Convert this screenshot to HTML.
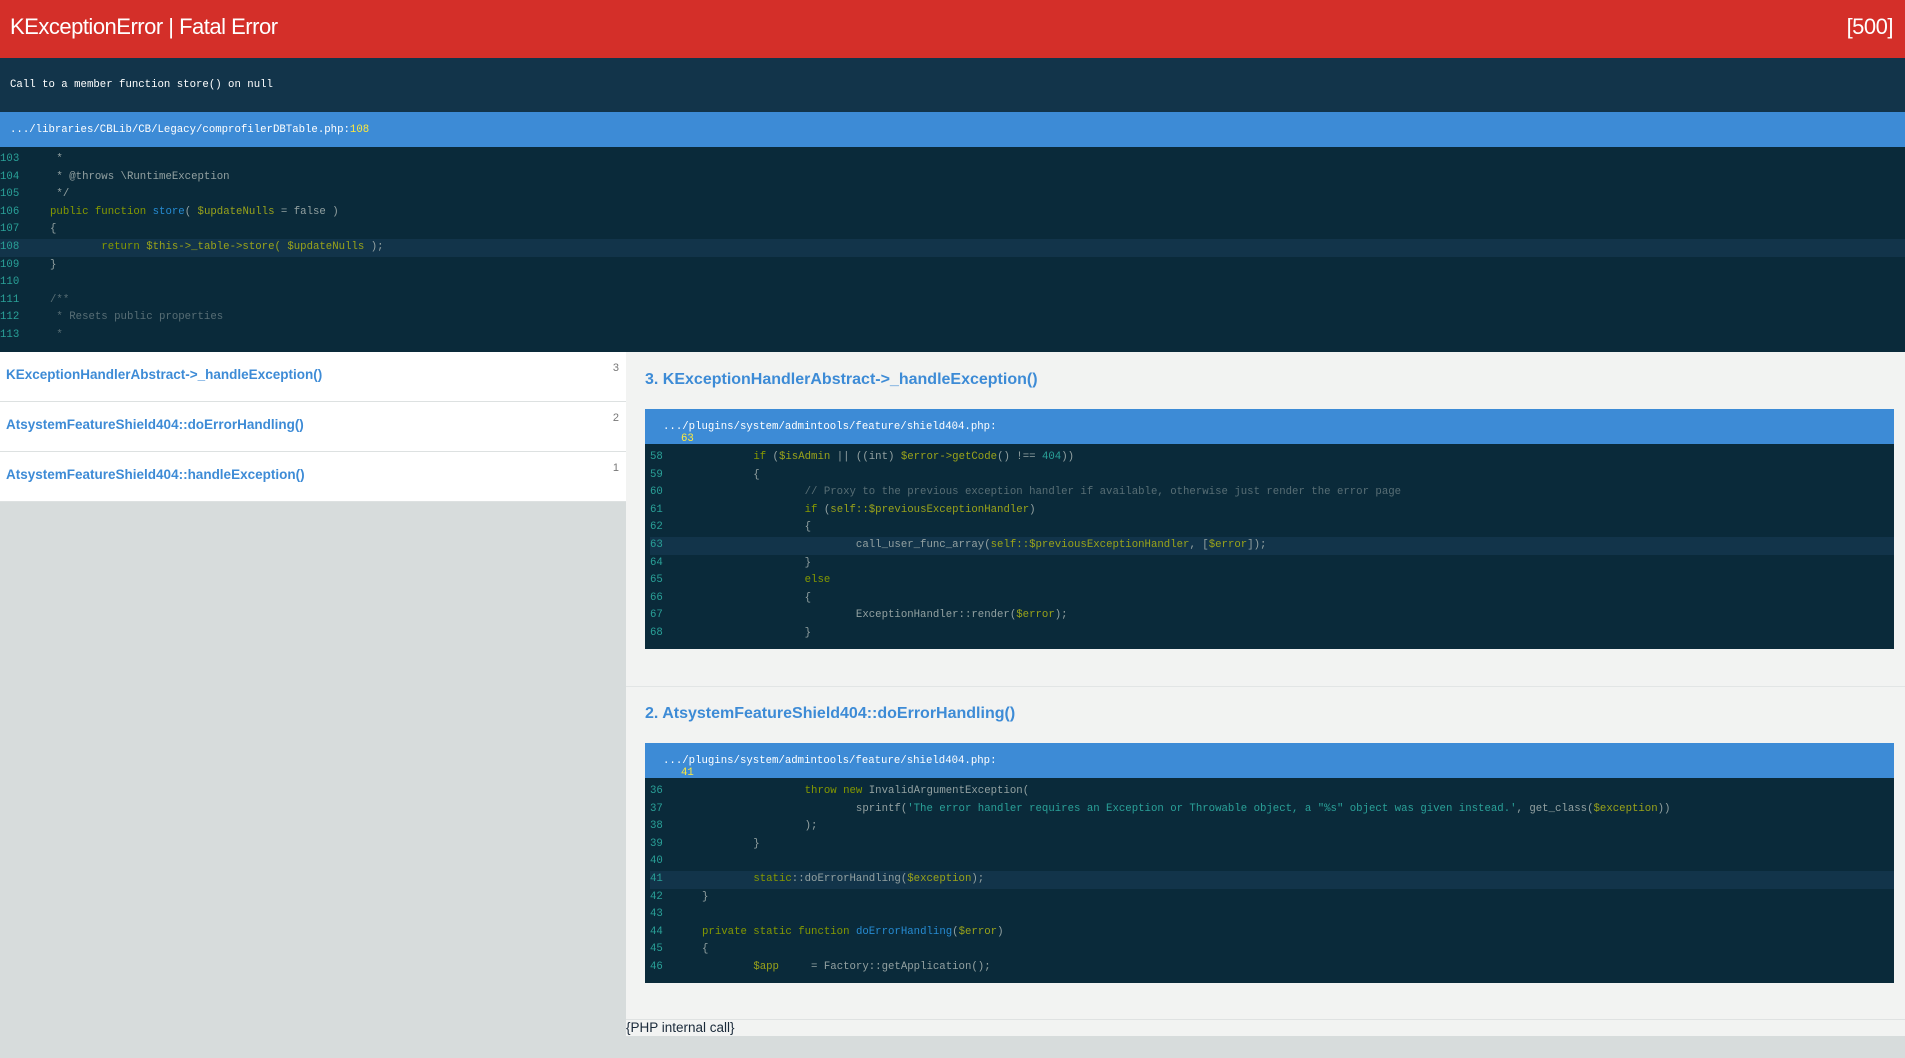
<!DOCTYPE html>
<html><head><meta charset="utf-8"><style>
*{margin:0;padding:0;box-sizing:border-box}
body{width:1905px;height:1058px;background:#d7dcdc;font-family:"Liberation Sans",sans-serif;position:relative;overflow:hidden}
.abs{position:absolute}
.hdr{left:0;top:0;width:1905px;height:58px;background:#d42f29;color:#fff;font-size:22px;letter-spacing:-0.5px}
.hdr .t{position:absolute;left:10px;top:14px}
.hdr .c{position:absolute;right:12px;top:14px}
.mono{font-family:"Liberation Mono",monospace;font-size:10.7px}
.msg{left:0;top:58px;width:1905px;height:54px;background:#12344a;color:#fff}
.msg span{position:absolute;left:10px;top:21px}
.path{background:#3d8bd6;color:#fff;height:35px}
.path span{position:absolute;left:18px;top:12px}
.y{color:#ffea3b}
.code{background:#0a2a3a}
.ln{position:absolute;height:17.6px;line-height:17.6px;white-space:pre;color:#93a1a1}
.ln .n{position:absolute;left:0;color:#2aa198}
.hl{background:#12344a}
.k{color:#859900}.v{color:#9aa31a}.f{color:#268bd2}.cm{color:#586e75}.nu{color:#2aa198}
.left{left:0;top:352px;width:626px}
.item{height:50px;background:#fff;border-bottom:1px solid #dde1e1;position:relative;color:#3d8bd6;font-weight:bold;font-size:13.5px}
.item .t{position:absolute;left:6px;top:15px}
.item .n{position:absolute;right:7px;top:10px;font-weight:normal;font-size:11px;color:#777}
.right{left:626px;top:352px;width:1279px;height:667px;background:#f2f3f2}
.h{color:#3d8bd6;font-weight:bold;font-size:16px;position:absolute;left:19px}
</style></head><body>
<div class="abs hdr"><span class="t">KExceptionError | Fatal Error</span><span class="c">[500]</span></div>
<div class="abs msg mono"><span>Call to a member function store() on null</span></div>
<div class="abs path mono" style="left:0;top:112px;width:1905px"><span style="left:10px">.../libraries/CBLib/CB/Legacy/comprofilerDBTable.php:<b class="y" style="font-weight:normal">108</b></span></div>
<div class="abs code mono" style="left:0;top:147px;width:1905px;height:205px">
<div class="ln" style="top:4px;left:0;width:1905px"><span class="n">103</span><span style="position:absolute;left:50px"> *</span></div>
<div class="ln" style="top:21.6px;left:0;width:1905px"><span class="n">104</span><span style="position:absolute;left:50px"> * @throws \RuntimeException</span></div>
<div class="ln" style="top:39.2px;left:0;width:1905px"><span class="n">105</span><span style="position:absolute;left:50px"> */</span></div>
<div class="ln" style="top:56.8px;left:0;width:1905px"><span class="n">106</span><span style="position:absolute;left:50px"><span class="k">public function</span> <span class="f">store</span>( <span class="v">$updateNulls</span> = false )</span></div>
<div class="ln" style="top:74.4px;left:0;width:1905px"><span class="n">107</span><span style="position:absolute;left:50px">{</span></div>
<div class="ln hl" style="top:92px;left:0;width:1905px"><span class="n">108</span><span style="position:absolute;left:50px">        <span class="k">return</span> <span class="v">$this-&gt;_table-&gt;store(</span> <span class="v">$updateNulls</span> );</span></div>
<div class="ln" style="top:109.6px;left:0;width:1905px"><span class="n">109</span><span style="position:absolute;left:50px">}</span></div>
<div class="ln" style="top:127.2px;left:0;width:1905px"><span class="n">110</span></div>
<div class="ln" style="top:144.8px;left:0;width:1905px"><span class="n">111</span><span class="cm" style="position:absolute;left:50px">/**</span></div>
<div class="ln" style="top:162.4px;left:0;width:1905px"><span class="n">112</span><span class="cm" style="position:absolute;left:50px"> * Resets public properties</span></div>
<div class="ln" style="top:180px;left:0;width:1905px"><span class="n">113</span><span class="cm" style="position:absolute;left:50px"> *</span></div>
</div>
<div class="abs left">
<div class="item"><span class="t">KExceptionHandlerAbstract-&gt;_handleException()</span><span class="n">3</span></div>
<div class="item"><span class="t">AtsystemFeatureShield404::doErrorHandling()</span><span class="n">2</span></div>
<div class="item"><span class="t">AtsystemFeatureShield404::handleException()</span><span class="n">1</span></div>
</div>
<div class="abs right">
<div class="h" style="top:19px">3. KExceptionHandlerAbstract-&gt;_handleException()</div>
<div class="abs path mono" style="left:19px;top:57px;width:1249px"><span>.../plugins/system/admintools/feature/shield404.php:<span class="y">63</span></span></div>
<div class="abs code mono" style="left:19px;top:92px;width:1249px;height:205px">
<div class="ln" style="top:5px;left:5px;width:1244px"><span class="n">58</span><span style="position:absolute;left:52px">        <span class="k">if</span> (<span class="v">$isAdmin</span> || ((int) <span class="v">$error-&gt;getCode</span>() !== <span class="nu">404</span>))</span></div>
<div class="ln" style="top:22.6px;left:5px;width:1244px"><span class="n">59</span><span style="position:absolute;left:52px">        {</span></div>
<div class="ln" style="top:40.2px;left:5px;width:1244px"><span class="n">60</span><span class="cm" style="position:absolute;left:52px">                // Proxy to the previous exception handler if available, otherwise just render the error page</span></div>
<div class="ln" style="top:57.8px;left:5px;width:1244px"><span class="n">61</span><span style="position:absolute;left:52px">                <span class="k">if</span> (<span class="v">self::$previousExceptionHandler</span>)</span></div>
<div class="ln" style="top:75.4px;left:5px;width:1244px"><span class="n">62</span><span style="position:absolute;left:52px">                {</span></div>
<div class="ln hl" style="top:93px;left:5px;width:1244px"><span class="n">63</span><span style="position:absolute;left:52px">                        call_user_func_array(<span class="v">self::$previousExceptionHandler</span>, [<span class="v">$error</span>]);</span></div>
<div class="ln" style="top:110.6px;left:5px;width:1244px"><span class="n">64</span><span style="position:absolute;left:52px">                }</span></div>
<div class="ln" style="top:128.2px;left:5px;width:1244px"><span class="n">65</span><span class="k" style="position:absolute;left:52px">                else</span></div>
<div class="ln" style="top:145.8px;left:5px;width:1244px"><span class="n">66</span><span style="position:absolute;left:52px">                {</span></div>
<div class="ln" style="top:163.4px;left:5px;width:1244px"><span class="n">67</span><span style="position:absolute;left:52px">                        ExceptionHandler::render(<span class="v">$error</span>);</span></div>
<div class="ln" style="top:181px;left:5px;width:1244px"><span class="n">68</span><span style="position:absolute;left:52px">                }</span></div>
</div>
<div class="abs" style="left:0;top:334px;width:1279px;height:1px;background:#e2e5e5"></div>
<div class="h" style="top:353px">2. AtsystemFeatureShield404::doErrorHandling()</div>
<div class="abs path mono" style="left:19px;top:391px;width:1249px"><span>.../plugins/system/admintools/feature/shield404.php:<span class="y">41</span></span></div>
<div class="abs code mono" style="left:19px;top:426px;width:1249px;height:205px">
<div class="ln" style="top:5px;left:5px;width:1244px"><span class="n">36</span><span style="position:absolute;left:52px">                <span class="k">throw new</span> InvalidArgumentException(</span></div>
<div class="ln" style="top:22.6px;left:5px;width:1244px"><span class="n">37</span><span style="position:absolute;left:52px">                        sprintf(<span class="nu">'The error handler requires an Exception or Throwable object, a "%s" object was given instead.'</span>, get_class(<span class="v">$exception</span>))</span></div>
<div class="ln" style="top:40.2px;left:5px;width:1244px"><span class="n">38</span><span style="position:absolute;left:52px">                );</span></div>
<div class="ln" style="top:57.8px;left:5px;width:1244px"><span class="n">39</span><span style="position:absolute;left:52px">        }</span></div>
<div class="ln" style="top:75.4px;left:5px;width:1244px"><span class="n">40</span></div>
<div class="ln hl" style="top:93px;left:5px;width:1244px"><span class="n">41</span><span style="position:absolute;left:52px">        <span class="k">static</span>::doErrorHandling(<span class="v">$exception</span>);</span></div>
<div class="ln" style="top:110.6px;left:5px;width:1244px"><span class="n">42</span><span style="position:absolute;left:52px">}</span></div>
<div class="ln" style="top:128.2px;left:5px;width:1244px"><span class="n">43</span></div>
<div class="ln" style="top:145.8px;left:5px;width:1244px"><span class="n">44</span><span style="position:absolute;left:52px"><span class="k">private static function</span> <span class="f">doErrorHandling</span>(<span class="v">$error</span>)</span></div>
<div class="ln" style="top:163.4px;left:5px;width:1244px"><span class="n">45</span><span style="position:absolute;left:52px">{</span></div>
<div class="ln" style="top:181px;left:5px;width:1244px"><span class="n">46</span><span style="position:absolute;left:52px">        <span class="v">$app</span>     = Factory::getApplication();</span></div>
</div>
</div>
<div class="abs" style="left:626px;top:1019px;width:1279px;height:17px;background:#f2f3f2;border-top:1px solid #dfe2e2;font-size:13.5px;color:#1a2a3a;line-height:16px">{PHP internal call}</div>
</body></html>
